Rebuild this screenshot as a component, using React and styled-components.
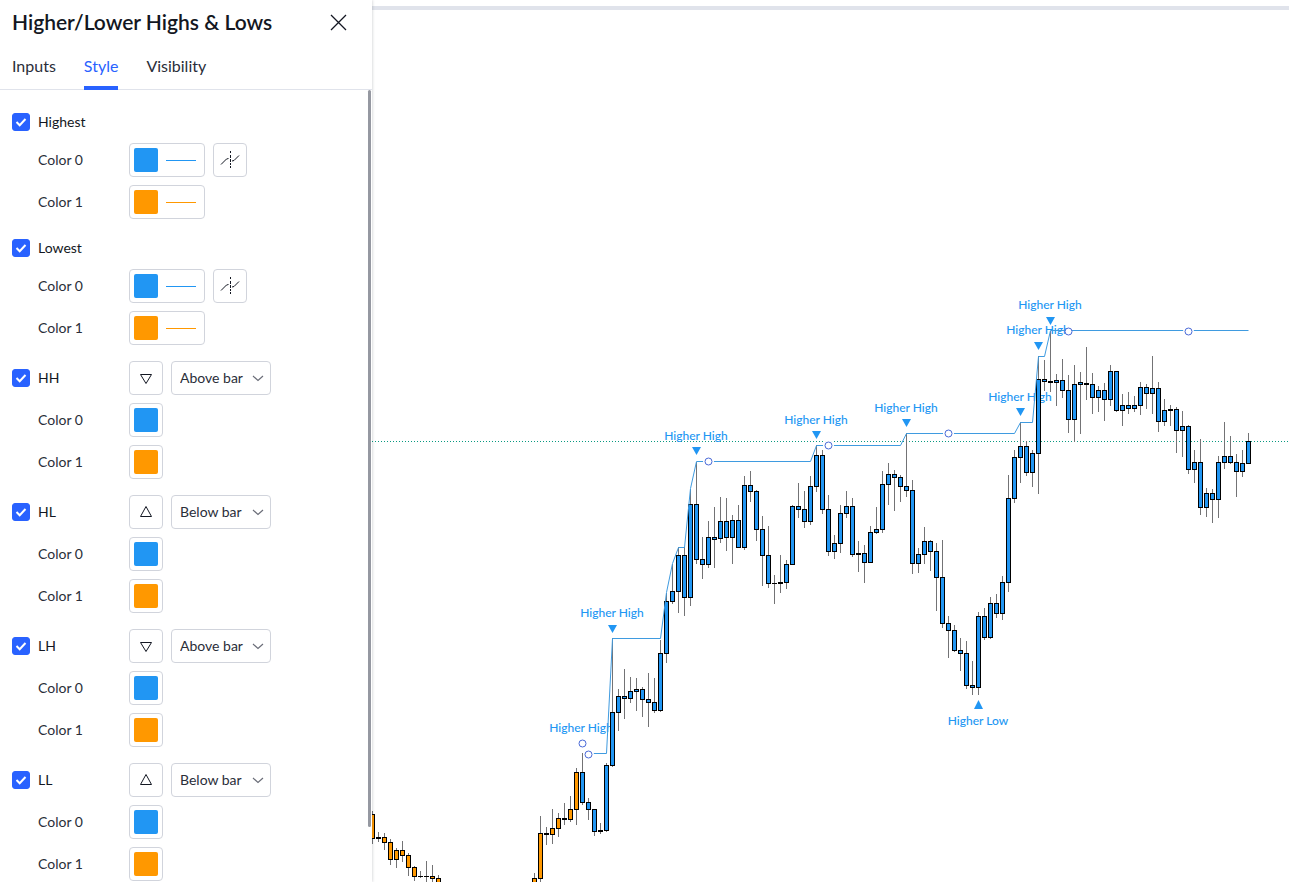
import React, { useState } from 'react';
import styled, { createGlobalStyle } from 'styled-components';

const colors = {
  text: '#131722',
  accent: '#2962ff',
  blue: '#2196f3',
  orange: '#ff9800',
  border: '#d1d4dc',
  line: '#e0e3eb',
};

const GlobalStyle = createGlobalStyle`
  * {
    box-sizing: border-box;
  }

  body {
    margin: 0;
    font-family: Lato, 'Noto Sans', sans-serif;
    font-size: 14px;
    color: ${colors.text};
    background: #fff;
    overflow: hidden;
  }

  button, select, input {
    font: inherit;
    color: inherit;
    margin: 0;
    padding: 0;
  }
`;

const Page = styled.div`
  display: flex;
  height: 100vh;
`;

const Panel = styled.aside`
  display: flex;
  flex-direction: column;
  flex: 0 0 372px;
  background: #fff;
  box-shadow: 0 0 3px rgba(19, 23, 34, 0.25);
  z-index: 1;
`;

const Header = styled.header`
  display: flex;
  align-items: center;
  justify-content: space-between;
  height: 44px;
  padding: 0 25px 0 12px;
`;

const Title = styled.h1`
  margin: 0;
  font-size: 21px;
  line-height: 28px;
  font-weight: 600;
`;

const CloseButton = styled.button`
  display: flex;
  border: 0;
  background: none;
  cursor: pointer;
`;

const Tabs = styled.nav`
  display: flex;
  gap: 28px;
  height: 46px;
  padding: 0 12px;
  border-bottom: 1px solid ${colors.line};
`;

const Tab = styled.button`
  height: 46px;
  padding-top: 2px;
  border: 0;
  border-bottom: 4px solid ${(props) => (props.$active ? colors.accent : 'transparent')};
  background: none;
  font-size: 16px;
  line-height: 40px;
  color: ${(props) => (props.$active ? colors.accent : '#2a2e39')};
  cursor: pointer;
`;

const PanelBody = styled.div`
  display: flex;
  flex: 1;
  min-height: 0;
  overflow: hidden;
`;

const Groups = styled.div`
  display: flex;
  flex-direction: column;
  flex: 1;
  gap: 16px;
  padding: 19px 0 0 12px;
`;

const Scrollbar = styled.div`
  width: 3px;
  height: 93%;
  margin-right: 1px;
  border-radius: 2px;
  background: #9598a1;
`;

const Group = styled.section`
  display: flex;
  flex-direction: column;
  gap: 8px;
`;

const Row = styled.div`
  display: grid;
  grid-template-columns: 117px 1fr;
  align-items: center;
  height: ${(props) => (props.$compact ? 26 : 34)}px;
`;

const Controls = styled.div`
  display: flex;
  gap: 8px;
`;

const CheckLabel = styled.label`
  display: flex;
  align-items: center;
  gap: 8px;
  cursor: pointer;
`;

const CheckBox = styled.span`
  display: grid;
  width: 18px;
  height: 18px;

  & > * {
    grid-area: 1 / 1;
  }

  svg {
    pointer-events: none;
  }
`;

const CheckInput = styled.input`
  appearance: none;
  width: 18px;
  height: 18px;
  border: 1px solid ${colors.border};
  border-radius: 3px;

  &:checked {
    border-color: ${colors.accent};
    background: ${colors.accent};
  }
`;

const Name = styled.span`
  padding-bottom: 2px;
`;

const ColorName = styled(Name)`
  padding-left: 26px;
  color: #2a2e39;
`;

const IconButton = styled.button`
  display: flex;
  align-items: center;
  justify-content: center;
  width: 34px;
  height: 34px;
  border: 1px solid ${colors.border};
  border-radius: 4px;
  background: #fff;
  cursor: pointer;
`;

const ColorButton = styled(IconButton)`
  justify-content: flex-start;
  gap: 8px;
  width: ${(props) => (props.$wide ? 76 : 34)}px;
  padding: 0 4px;
`;

const Swatch = styled.span`
  width: 24px;
  height: 24px;
  border-radius: 2px;
  background: ${(props) => props.$color};
`;

const LineSample = styled.span`
  width: 30px;
  height: 1px;
  background: ${(props) => props.$color};
`;

const SelectBox = styled.div`
  display: grid;
  align-items: center;
  width: 100px;
  height: 34px;

  & > * {
    grid-area: 1 / 1;
  }

  svg {
    justify-self: end;
    margin-right: 6px;
    pointer-events: none;
  }
`;

const Select = styled.select`
  appearance: none;
  width: 100px;
  height: 34px;
  padding: 0 0 2px 8px;
  border: 1px solid ${colors.border};
  border-radius: 4px;
  background: #fff;
  color: #2a2e39;
  cursor: pointer;
`;

const ChartArea = styled.main`
  display: flex;
  flex-direction: column;
  flex: 1;
  min-width: 0;
  padding-top: 6px;
`;

const Divider = styled.div`
  flex: 0 0 4px;
  background: ${colors.line};
`;

const ChartSvg = styled.svg`
  display: block;
  flex: 1;
  width: 100%;
  min-height: 0;
`;

const ChartLabel = styled.text`
  font-size: 12px;
  font-weight: 500;
  fill: ${colors.blue};
  text-anchor: middle;
`;

const groups = [
  { name: 'Highest', line: true },
  { name: 'Lowest', line: true },
  { name: 'HH', shape: 'down', position: 'Above bar' },
  { name: 'HL', shape: 'up', position: 'Below bar' },
  { name: 'LH', shape: 'down', position: 'Above bar' },
  { name: 'LL', shape: 'up', position: 'Below bar' },
];

const palette = [colors.blue, colors.orange];

// [x, high, body top, body bottom, low]
const candles = [
  [372, 811, 814, 839, 844], [378, 832, 837, 839, 842], [384, 833, 837, 843, 850],
  [390, 839, 842, 860, 865], [396, 848, 850, 860, 868], [402, 841, 850, 856, 862],
  [408, 853, 855, 868, 876], [414, 866, 867, 877, 881], [420, 871, 876, 877, 878],
  [426, 861, 876, 877, 882], [432, 865, 876, 879, 882], [438, 875, 878, 890, 890],
  [534, 873, 878, 890, 890], [540, 816, 833, 879, 882], [546, 827, 833, 835, 845],
  [552, 809, 828, 835, 844], [558, 813, 818, 829, 837], [564, 803, 818, 820, 825],
  [570, 796, 809, 820, 822], [576, 768, 772, 810, 825], [582, 753, 772, 803, 805],
  [588, 798, 802, 810, 820], [594, 809, 809, 832, 836], [600, 823, 830, 832, 834],
  [606, 763, 765, 831, 832], [612, 638, 712, 766, 767], [618, 689, 696, 713, 731],
  [624, 669, 696, 699, 719], [630, 677, 691, 699, 703], [636, 678, 689, 692, 711],
  [642, 687, 689, 700, 717], [648, 673, 699, 703, 727], [654, 678, 702, 711, 713],
  [660, 640, 653, 711, 712], [666, 593, 601, 654, 663], [672, 564, 591, 602, 604],
  [678, 547, 555, 592, 613], [684, 547, 555, 598, 616], [690, 489, 504, 598, 606],
  [696, 462, 504, 560, 564], [702, 537, 559, 565, 579], [708, 521, 537, 565, 568],
  [714, 507, 537, 540, 568], [720, 497, 521, 539, 543], [726, 498, 521, 538, 551],
  [732, 515, 520, 538, 564], [738, 505, 520, 548, 548], [744, 476, 485, 548, 550],
  [750, 471, 485, 492, 502], [756, 490, 491, 530, 541], [762, 516, 529, 556, 586],
  [768, 526, 555, 584, 588], [774, 575, 583, 584, 604], [780, 555, 582, 584, 593],
  [786, 560, 564, 583, 589], [792, 505, 506, 565, 565], [798, 483, 506, 510, 518],
  [804, 491, 509, 522, 528], [810, 476, 486, 522, 525], [816, 445, 455, 487, 492],
  [822, 450, 455, 510, 514], [828, 495, 509, 552, 556], [834, 535, 543, 552, 559],
  [840, 505, 513, 544, 553], [846, 491, 506, 514, 518], [852, 498, 506, 555, 557],
  [858, 541, 553, 555, 572], [864, 545, 553, 563, 583], [870, 526, 532, 563, 563],
  [876, 507, 529, 533, 534], [882, 471, 484, 530, 533], [888, 463, 474, 485, 505],
  [894, 470, 474, 478, 511], [900, 475, 477, 487, 502], [906, 433, 486, 491, 497],
  [912, 480, 490, 564, 574], [918, 548, 554, 564, 573], [924, 527, 541, 555, 564],
  [930, 540, 541, 552, 571], [936, 543, 551, 578, 611], [942, 540, 577, 624, 628],
  [948, 616, 623, 631, 658], [954, 625, 630, 651, 652], [960, 638, 650, 654, 671],
  [966, 641, 653, 686, 689], [972, 661, 685, 688, 695], [978, 612, 616, 688, 695],
  [984, 608, 616, 638, 640], [990, 597, 603, 638, 639], [996, 594, 603, 614, 618],
  [1002, 576, 582, 614, 620], [1008, 475, 498, 583, 592], [1014, 450, 457, 499, 503],
  [1020, 422, 446, 458, 483], [1026, 441, 446, 473, 476], [1032, 450, 453, 473, 487],
  [1038, 356, 379, 454, 494], [1044, 360, 379, 382, 391], [1050, 331, 381, 383, 392],
  [1056, 374, 380, 383, 406], [1062, 359, 380, 391, 398], [1068, 375, 390, 420, 433],
  [1074, 365, 384, 420, 442], [1080, 372, 382, 385, 434], [1086, 347, 383, 385, 400],
  [1092, 373, 384, 398, 414], [1098, 386, 390, 398, 412], [1104, 383, 390, 400, 421],
  [1110, 365, 371, 400, 406], [1116, 371, 371, 411, 412], [1122, 394, 405, 411, 426],
  [1128, 392, 405, 409, 414], [1134, 396, 405, 409, 412], [1140, 382, 387, 406, 415],
  [1146, 384, 387, 394, 409], [1152, 356, 388, 394, 414], [1158, 382, 388, 422, 432],
  [1164, 399, 410, 422, 426], [1170, 405, 409, 411, 426], [1176, 407, 409, 431, 453],
  [1182, 411, 426, 431, 457], [1188, 425, 426, 470, 474], [1194, 450, 462, 470, 483],
  [1200, 439, 462, 508, 515], [1206, 488, 493, 508, 517], [1212, 489, 493, 500, 523],
  [1218, 456, 462, 500, 518], [1224, 422, 456, 463, 469], [1230, 436, 456, 463, 464],
  [1236, 454, 462, 472, 497], [1242, 450, 463, 472, 477], [1248, 433, 441, 464, 464],
];

const highLine = [
  [588, 753], [606, 753], [612, 638], [660, 638], [666, 592], [672, 563], [678, 547],
  [684, 547], [690, 488], [696, 461], [810, 461], [816, 445], [900, 445], [906, 433],
  [1014, 433], [1020, 422], [1032, 422], [1038, 356], [1044, 356], [1050, 330], [1248, 330],
];

const anchors = [
  [582, 743], [588, 754], [708, 461], [828, 445], [948, 433], [1068, 331], [1188, 331],
];

// [x, label baseline, marker top]
const highs = [
  [581, 732], [612, 617, 625], [696, 440, 447], [816, 424, 431], [906, 412, 419],
  [1020, 401, 408], [1038, 334, 342], [1050, 309, 317],
];

function CheckIcon() {
  return (
    <svg width="18" height="18" viewBox="0 0 18 18" fill="none" stroke="#fff" strokeWidth="2">
      <path d="M4.5 9l3.2 3.2L13.5 6" />
    </svg>
  );
}

function CloseIcon() {
  return (
    <svg width="17" height="17" viewBox="0 0 17 17" fill="none" stroke={colors.text} strokeWidth="1.3">
      <path d="M1 1l15 15M16 1L1 16" />
    </svg>
  );
}

function TriangleIcon({ shape }) {
  return (
    <svg width="14" height="14" viewBox="0 0 14 14" fill="none" stroke={colors.text} strokeWidth="1">
      <path d={shape === 'up' ? 'M7 1.5L12.5 11.5H1.5Z' : 'M7 12.5L12.5 3.5H1.5Z'} />
    </svg>
  );
}

function PriceLineIcon() {
  return (
    <svg width="20" height="20" viewBox="0 0 20 20" fill="none" stroke={colors.text} strokeWidth="1">
      <path d="M1 14.5L6.5 9L8.5 8.5M12 11L14 10.5L19 5.5" />
      <path d="M10.5 1v2M10.5 5v3M10.5 9v3M10.5 13v2M10.5 16v2" />
    </svg>
  );
}

function ChevronIcon() {
  return (
    <svg width="14" height="8" viewBox="0 0 14 8" fill="none" stroke="#6a6d78" strokeWidth="1.2">
      <path d="M2 2L7 6.5L12 2" />
    </svg>
  );
}

function StyleGroup({ group }) {
  const [checked, setChecked] = useState(true);

  return (
    <Group>
      <Row $compact={group.line}>
        <CheckLabel>
          <CheckBox>
            <CheckInput type="checkbox" checked={checked} onChange={() => setChecked(!checked)} />
            {checked && <CheckIcon />}
          </CheckBox>
          <Name>{group.name}</Name>
        </CheckLabel>
        {group.shape && (
          <Controls>
            <IconButton aria-label={`${group.name} shape`}>
              <TriangleIcon shape={group.shape} />
            </IconButton>
            <SelectBox>
              <Select aria-label={`${group.name} position`} defaultValue={group.position}>
                <option>Above bar</option>
                <option>Below bar</option>
              </Select>
              <ChevronIcon />
            </SelectBox>
          </Controls>
        )}
      </Row>
      {palette.map((color, i) => (
        <Row key={color}>
          <ColorName>Color {i}</ColorName>
          <Controls>
            <ColorButton $wide={group.line} aria-label={`${group.name} color ${i}`}>
              <Swatch $color={color} />
              {group.line && <LineSample $color={color} />}
            </ColorButton>
            {group.line && i === 0 && (
              <IconButton aria-label={`${group.name} plot type`}>
                <PriceLineIcon />
              </IconButton>
            )}
          </Controls>
        </Row>
      ))}
    </Group>
  );
}

function Candle({ data }) {
  const [x, high, top, bottom, low] = data;
  const fill = x < 580 ? colors.orange : colors.blue;
  const height = bottom - top;

  return (
    <g>
      <rect x={x} y={high} width="1" height={low - high} fill="#737375" />
      <rect x={x - 2} y={top} width="5" height={height} fill="#000" />
      {height > 2 && <rect x={x - 1} y={top + 1} width="3" height={height - 2} fill={fill} />}
    </g>
  );
}

function Chart() {
  const points = highLine.map(([x, y]) => `${x + 0.5},${y + 0.5}`).join(' ');

  return (
    <ChartSvg viewBox="372 10 917 872" preserveAspectRatio="xMinYMin slice">
      <path d="M372 441.5H1289" stroke="#089981" strokeDasharray="1 2" />
      {highs.map(([x, y]) => (
        <ChartLabel key={x} x={x} y={y}>Higher High</ChartLabel>
      ))}
      <ChartLabel x="978" y="725">Higher Low</ChartLabel>
      {candles.map((c) => <Candle key={c[0]} data={c} />)}
      <polyline points={points} fill="none" stroke="#3f9be0" strokeWidth="1" />
      {highs.filter((h) => h[2]).map(([x, , y]) => (
        <path key={x} d={`M${x - 4} ${y}h9l-4.5 8z`} fill={colors.blue} />
      ))}
      <path d="M974 709h9l-4.5 -9z" fill={colors.blue} />
      {anchors.map(([x, y]) => (
        <g key={x}>
          <circle cx={x + 0.5} cy={y + 0.5} r="5.5" fill="#fff" fillOpacity={x === 1068 ? 0 : 1} />
          <circle cx={x + 0.5} cy={y + 0.5} r="3.5" fill="#fff" stroke="#4a6ad8" strokeWidth="1" />
        </g>
      ))}
    </ChartSvg>
  );
}

function App() {
  const [tab, setTab] = useState('Style');

  return (
    <>
      <GlobalStyle />
      <Page>
        <Panel>
          <Header>
            <Title>Higher/Lower Highs &amp; Lows</Title>
            <CloseButton aria-label="Close">
              <CloseIcon />
            </CloseButton>
          </Header>
          <Tabs>
            {['Inputs', 'Style', 'Visibility'].map((name) => (
              <Tab key={name} $active={name === tab} onClick={() => setTab(name)}>{name}</Tab>
            ))}
          </Tabs>
          <PanelBody>
            <Groups>
              {groups.map((group) => <StyleGroup key={group.name} group={group} />)}
            </Groups>
            <Scrollbar />
          </PanelBody>
        </Panel>
        <ChartArea>
          <Divider />
          <Chart />
        </ChartArea>
      </Page>
    </>
  );
}

export default App;
